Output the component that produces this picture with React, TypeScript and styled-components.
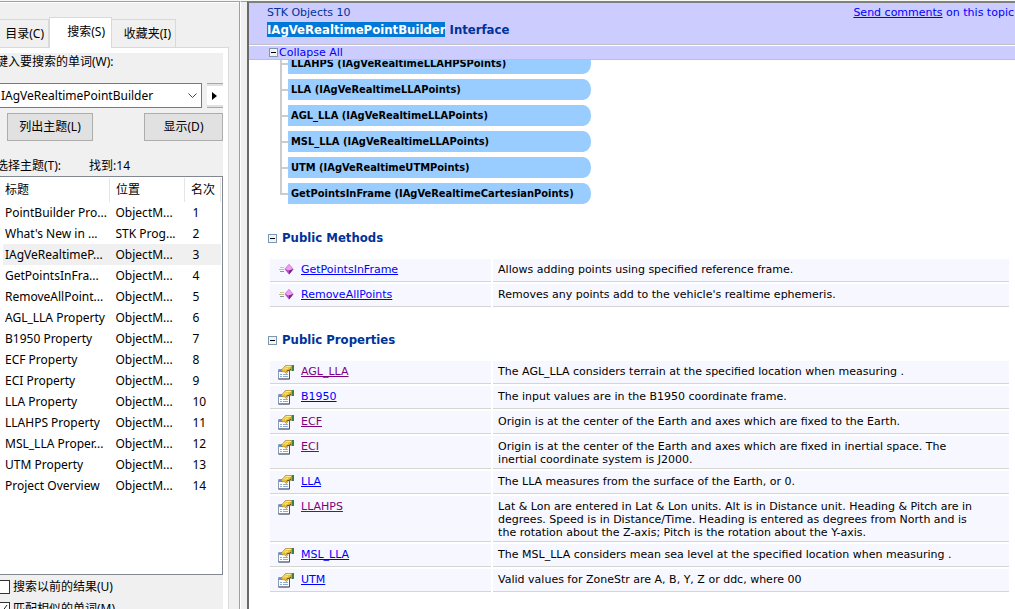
import React from "react";
import styled, { createGlobalStyle } from "styled-components";

const Global = createGlobalStyle`
  *, *::before { box-sizing: border-box; }
  body { margin: 0; background: #f0f0f0; overflow: hidden; }
`;

const uiFont = `"Noto Sans", "Noto Sans CJK SC", sans-serif`;
const docFont = `"DejaVu Sans", Verdana, sans-serif`;
const boldFont = `"DejaVu Sans Condensed", "DejaVu Sans", sans-serif`;

const Window = styled.div`
  display: flex;
  height: 100vh;
  overflow: hidden;
  background: #f0f0f0;
  border-top: 1px solid #f6f8f4;
`;

const Sidebar = styled.aside`
  flex: 0 0 240px;
  display: flex;
  flex-direction: column;
  overflow: hidden;
  border-top: 1px solid #a0a0a0;
  border-right: 1px solid #a0a0a0;
  font: 12px/16px ${uiFont};
  color: #000;
  box-shadow: inset 0 1px #fff;
`;

const Splitter = styled.div`
  flex: 0 0 7px;
  border-top: 1px solid #a0a0a0;
  border-left: 1px solid #fff;
`;

const Tabs = styled.div`
  display: flex;
  align-items: flex-end;
  height: 45px;
  flex: none;
`;

const Tab = styled.button<{ $active?: boolean; $width: number }>`
  width: ${(p) => p.$width}px;
  height: ${(p) => (p.$active ? 31 : 28)}px;
  margin-bottom: ${(p) => (p.$active ? -1 : 0)}px;
  padding: ${(p) => (p.$active ? "0 6px 2px 0" : "0 4px 0 0")};
  text-align: right;
  white-space: nowrap;
  font: inherit;
  color: inherit;
  border: 1px solid #d9d9d9;
  border-bottom: 0;
  border-left-width: ${(p) => (p.$active ? 1 : 0)}px;
  background: ${(p) => (p.$active ? "#fff" : "#f0f0f0")};
  z-index: ${(p) => (p.$active ? 1 : 0)};
`;

const TabPage = styled.div`
  flex: 1;
  width: 229px;
  display: flex;
  min-height: 0;
  padding: 5px 5px 0 0;
  background: #fff;
  border: solid #d9d9d9;
  border-width: 1px 1px 0 0;
`;

const SearchForm = styled.form`
  flex: 1;
  min-width: 0;
  display: flex;
  flex-direction: column;
  background: #f0f0f0;
  & > * { flex-shrink: 0; }
`;

const Caption = styled.label`
  display: block;
  margin: 1px 0 13px -4px;
  white-space: nowrap;
`;

const QueryRow = styled.div`
  display: flex;
  gap: 5px;
  height: 25px;
`;

const Combo = styled.div`
  flex: 1;
  display: flex;
  align-items: center;
  padding-right: 4px;
  background: #fff;
  border: 1px solid #7a7a7a;
  border-left: 0;
`;

const Query = styled.select`
  flex: 1;
  min-width: 0;
  appearance: none;
  border: 0;
  padding: 0 0 0 1px;
  background: transparent;
  font: inherit;
  color: #000;
`;

const MoreButton = styled.button`
  width: 16px;
  display: flex;
  align-items: center;
  justify-content: center;
  padding: 0 2px 0 0;
  background: #fff;
  border: solid #a8a8a8;
  border-width: 1px 0;
  box-shadow: inset 0 2px #e1e1e1, inset 0 -2px #e1e1e1;
`;

const ButtonRow = styled.div`
  display: flex;
  justify-content: space-between;
  margin: 5px 0 17px;
  padding-left: 7px;
`;

const PushButton = styled.button<{ $width: number }>`
  width: ${(p) => p.$width}px;
  height: 28px;
  padding: 0;
  background: #e1e1e1;
  border: 1px solid #adadad;
  font: inherit;
  color: #000;
`;

const ResultInfo = styled.div`
  display: flex;
  gap: 28px;
  margin: 0 0 2px -4px;
  white-space: nowrap;
`;

const ListBox = styled.div`
  height: 399px;
  padding: 1px 1px 0 3px;
  background: #fff;
  border: solid #828790;
  border-width: 1px 1px 1px 0;
`;

const ResultTable = styled.table`
  width: 100%;
  table-layout: fixed;
  border-collapse: collapse;
  th, td {
    height: 21px;
    padding: 0 0 0 2px;
    font-weight: normal;
    text-align: left;
    white-space: nowrap;
  }
  th { height: 24px; border-right: 1px solid #e5e5e5; }
  th + th, td + td { padding-left: 6px; }
  td:last-child { padding-left: 8px; }
`;

const ResultRow = styled.tr<{ $selected?: boolean }>`
  background: ${(p) => (p.$selected ? "#f0f0f0" : "transparent")};
`;

const Option = styled.label`
  display: flex;
  align-items: center;
  gap: 3px;
  margin: 4px 0 2px -4px;
  white-space: nowrap;
`;

const Tick = styled.input`
  appearance: none;
  flex: none;
  width: 14px;
  height: 14px;
  margin: 0;
  background: #fff;
  border: 1px solid #333;
  &:checked {
    background: #fff url("data:image/svg+xml,%3Csvg xmlns='http://www.w3.org/2000/svg' width='12' height='12'%3E%3Cpath d='M2 6l3 3 5-7' fill='none' stroke='%23222'/%3E%3C/svg%3E");
  }
`;

const Document = styled.main`
  flex: 1;
  min-width: 0;
  display: flex;
  flex-direction: column;
  background: #fff;
  border: solid #696969;
  border-width: 2px 0 0 2px;
  border-top-color: #808080;
  font: 11px/13px ${docFont};
  color: #000;
`;

const Banner = styled.header`
  display: flex;
  justify-content: space-between;
  padding: 3px 1px 7px 18px;
  background: #ccccff;
  border-bottom: 1px solid #c0c0c0;
  white-space: nowrap;
`;

const Product = styled.div`
  color: #003399;
  line-height: 14px;
`;

const Title = styled.h1`
  margin: 2px 0 0;
  font: bold 13px/15px ${boldFont};
  color: #003399;
  mark { background: #0078d7; color: #fff; }
`;

const Feedback = styled.div`
  color: #0000ff;
  line-height: 14px;
  a { color: #0000ff; }
`;

const CollapseBar = styled.div`
  margin-top: 1px;
  padding-left: 20px;
  background: #ccccff;
  border-bottom: 1px solid #c0c0c0;
`;

const CollapseButton = styled.button`
  display: flex;
  align-items: center;
  gap: 1px;
  padding: 0;
  border: 0;
  background: transparent;
  font: 11px/13px ${docFont};
  color: #0000ff;
`;

const Content = styled.div`
  flex: 1;
  overflow: hidden;
`;

const Tree = styled.ul`
  margin: -7px 0 21px 31px;
  padding: 0;
  list-style: none;
  font: bold 11px/21px ${boldFont};
`;

const Branch = styled.li`
  display: flex;
  align-items: flex-start;
  height: 26px;
  &::before {
    content: "";
    width: 8px;
    height: 12px;
    border: solid #ccc;
    border-width: 0 0 2px 2px;
  }
  &:not(:last-child) {
    background: linear-gradient(#ccc, #ccc) 0 0 / 2px 100% no-repeat;
  }
`;

const Pill = styled.span`
  width: 303px;
  height: 21px;
  padding-left: 3px;
  background: #99ccff;
  border-radius: 0 8px 8px 0 / 0 10px 10px 0;
  white-space: nowrap;
`;

const Section = styled.section`
  margin-bottom: 23px;
`;

const Heading = styled.h2`
  display: flex;
  align-items: center;
  gap: 5px;
  margin: 0 0 11px 19px;
  font: bold 13px/16px ${boldFont};
  color: #003399;
`;

const Members = styled.table`
  width: calc(100% - 4px);
  padding-left: 19px;
  border-spacing: 2px;
  table-layout: fixed;
  td {
    height: 23px;
    padding: 4px 5px 2px;
    vertical-align: top;
    background: #f7f7ff;
    border-bottom: 1px solid #d5d5d3;
  }
`;

const MemberName = styled.div`
  display: flex;
  gap: 7px;
  height: 16px;
  padding-left: 3px;
`;

const MemberLink = styled.a<{ $visited?: boolean }>`
  color: ${(p) => (p.$visited ? "#800080" : "#0000ff")};
`;

const Minus = () => (
  <svg width="9" height="9" viewBox="0 0 9 9" shapeRendering="crispEdges">
    <rect x=".5" y=".5" width="8" height="8" fill="#f4f3ee" stroke="#7898b5" />
    <path d="M2 4.5h5" stroke="#000" />
  </svg>
);

const MethodIcon = () => (
  <svg width="16" height="16" viewBox="0 1 16 16">
    <path d="M2 5.500h4" stroke="#c9cc8e" />
    <path d="M1 7.500h5" stroke="#b9bfa0" />
    <path d="M2 9.500h4" stroke="#8b93a0" />
    <path d="M11 2l4.500 5-4.500 5.500L6.500 7z" fill="#b44fc0" />
    <path d="M11 2.500l4 4.500-4 1.500L7 7z" fill="#ee9df2" />
    <path d="M11 8.500l4.500-1.500-4.500 5.500z" fill="#74287f" />
  </svg>
);

const PropertyIcon = () => (
  <svg width="16" height="16" viewBox="0 1 16 16">
    <path d="M.5 5.500h11v9.500h-11z" fill="#fff" stroke="#8a9bb8" />
    <path d="M11.500 7v8h-11" fill="none" stroke="#4a5468" />
    <path d="M1 6h4v2h-4z" fill="#5e93e0" />
    <path d="M2 10.500h2M5 10.500h5M2 12.500h2M5 12.500h5" stroke="#8faad4" />
    <path d="M3 6.500L7.500 1.500 13 1v5l-3 1-2 0 1.500 1.500-1 1L6 7.500 4.500 8z" fill="#ecbf38" stroke="#7a6118" strokeWidth=".5" />
    <path d="M5 5.500l3-3h5M7 5.500l3-1.500" stroke="#fdf08a" fill="none" />
    <path d="M9 7l4-1.500" stroke="#5c4a14" />
    <path d="M13 1h1.500v6H13z" fill="#9aa39a" />
    <path d="M14 1h2v6h-2z" fill="#3f8048" />
  </svg>
);

const results = [
  ["PointBuilder Pro...", "ObjectM..."],
  ["What's New in ...", "STK Prog..."],
  ["IAgVeRealtimeP...", "ObjectM..."],
  ["GetPointsInFra...", "ObjectM..."],
  ["RemoveAllPoint...", "ObjectM..."],
  ["AGL_LLA Property", "ObjectM..."],
  ["B1950 Property", "ObjectM..."],
  ["ECF Property", "ObjectM..."],
  ["ECI Property", "ObjectM..."],
  ["LLA Property", "ObjectM..."],
  ["LLAHPS Property", "ObjectM..."],
  ["MSL_LLA Proper...", "ObjectM..."],
  ["UTM Property", "ObjectM..."],
  ["Project Overview", "ObjectM..."],
];

const branches = [
  "LLAHPS (IAgVeRealtimeLLAHPSPoints)",
  "LLA (IAgVeRealtimeLLAPoints)",
  "AGL_LLA (IAgVeRealtimeLLAPoints)",
  "MSL_LLA (IAgVeRealtimeLLAPoints)",
  "UTM (IAgVeRealtimeUTMPoints)",
  "GetPointsInFrame (IAgVeRealtimeCartesianPoints)",
];

type Member = { name: string; text: string; visited?: boolean };

const methods: Member[] = [
  { name: "GetPointsInFrame", text: "Allows adding points using specified reference frame." },
  { name: "RemoveAllPoints", text: "Removes any points add to the vehicle's realtime ephemeris." },
];

const properties: Member[] = [
  { name: "AGL_LLA", visited: true, text: "The AGL_LLA considers terrain at the specified location when measuring ." },
  { name: "B1950", text: "The input values are in the B1950 coordinate frame." },
  { name: "ECF", visited: true, text: "Origin is at the center of the Earth and axes which are fixed to the Earth." },
  { name: "ECI", visited: true, text: "Origin is at the center of the Earth and axes which are fixed in inertial space. The inertial\u00a0coordinate system is J2000." },
  { name: "LLA", text: "The LLA measures from the surface of the Earth, or 0." },
  { name: "LLAHPS", visited: true, text: "Lat & Lon are entered in Lat & Lon units. Alt is in Distance unit. Heading & Pitch are in degrees. Speed is in Distance/Time. Heading is entered as degrees from North and is the\u00a0rotation about the Z-axis; Pitch is the rotation about the Y-axis." },
  { name: "MSL_LLA", text: "The MSL_LLA considers mean sea level at the specified location when measuring ." },
  { name: "UTM", text: "Valid values for ZoneStr are A, B, Y, Z or ddc, where 00" },
];

const MemberSection = ({ title, items, icon }: { title: string; items: Member[]; icon: React.ReactNode }) => (
  <Section>
    <Heading><Minus />{title}</Heading>
    <Members>
      <colgroup><col style={{ width: "30%" }} /><col /></colgroup>
      <tbody>
        {items.map((m) => (
          <tr key={m.name}>
            <td><MemberName>{icon}<MemberLink href="#" $visited={m.visited}>{m.name}</MemberLink></MemberName></td>
            <td>{m.text}</td>
          </tr>
        ))}
      </tbody>
    </Members>
  </Section>
);

export default function App() {
  return (
    <>
      <Global />
      <Window>
        <Sidebar>
          <Tabs>
            <Tab $width={49}>目录(C)</Tab>
            <Tab $width={63} $active>搜索(S)</Tab>
            <Tab $width={64}>收藏夹(I)</Tab>
          </Tabs>
          <TabPage>
            <SearchForm onSubmit={(e) => e.preventDefault()}>
              <Caption htmlFor="query">键入要搜索的单词(W):</Caption>
              <QueryRow>
                <Combo>
                  <Query id="query"><option>IAgVeRealtimePointBuilder</option></Query>
                  <svg width="9" height="6" viewBox="0 0 9 6"><path d="M.5.5l4 4 4-4" fill="none" stroke="#444" /></svg>
                </Combo>
                <MoreButton type="button" aria-label="More">
                  <svg width="5" height="8" viewBox="0 0 5 8"><path d="M0 0l5 4-5 4z" /></svg>
                </MoreButton>
              </QueryRow>
              <ButtonRow>
                <PushButton $width={86}>列出主题(L)</PushButton>
                <PushButton $width={79} type="button">显示(D)</PushButton>
              </ButtonRow>
              <ResultInfo><span>选择主题(T):</span><span>找到:14</span></ResultInfo>
              <ListBox>
                <ResultTable>
                  <colgroup><col /><col style={{ width: 75 }} /><col style={{ width: 36 }} /></colgroup>
                  <thead><tr><th>标题</th><th>位置</th><th>名次</th></tr></thead>
                  <tbody>
                    {results.map(([title, place], i) => (
                      <ResultRow key={title} $selected={i === 2}>
                        <td>{title}</td><td>{place}</td><td>{i + 1}</td>
                      </ResultRow>
                    ))}
                  </tbody>
                </ResultTable>
              </ListBox>
              <Option><Tick type="checkbox" />搜索以前的结果(U)</Option>
              <Option><Tick type="checkbox" defaultChecked />匹配相似的单词(M)</Option>
            </SearchForm>
          </TabPage>
        </Sidebar>
        <Splitter />
        <Document>
          <Banner>
            <div>
              <Product>STK Objects 10</Product>
              <Title><mark>IAgVeRealtimePointBuilder</mark> Interface</Title>
            </div>
            <Feedback><a href="#">Send comments</a> on this topic</Feedback>
          </Banner>
          <CollapseBar>
            <CollapseButton><Minus />Collapse All</CollapseButton>
          </CollapseBar>
          <Content>
            <Tree>{branches.map((b) => <Branch key={b}><Pill>{b}</Pill></Branch>)}</Tree>
            <MemberSection title="Public Methods" items={methods} icon={<MethodIcon />} />
            <MemberSection title="Public Properties" items={properties} icon={<PropertyIcon />} />
          </Content>
        </Document>
      </Window>
    </>
  );
}
